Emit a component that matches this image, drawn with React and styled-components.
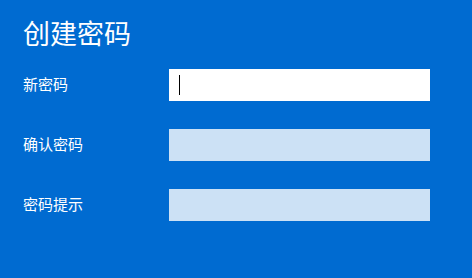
import React from 'react'
import styled, { createGlobalStyle } from 'styled-components'

const GlobalStyle = createGlobalStyle`
  html, body {
    margin: 0;
    padding: 0;
    background: #006bd1;
  }
  body {
    font-family: "Noto Sans CJK SC", "Noto Sans", sans-serif;
  }
`

const Page = styled.div`
  width: 472px;
  height: 278px;
  background: #006bd1;
  color: #ffffff;
  padding: 19px 0 0 23px;
  box-sizing: border-box;
  overflow: hidden;
`

const Title = styled.h1`
  margin: 0 0 22px 0;
  font-size: 27px;
  line-height: 28px;
  font-weight: 400;
`

const Form = styled.div`
  display: flex;
  flex-direction: column;
  gap: 28px;
`

const Row = styled.div`
  display: flex;
  align-items: center;
  height: 32px;
`

const Label = styled.label`
  width: 146px;
  font-size: 15px;
  line-height: 1;
  margin-top: -4px;
`

const Field = styled.div`
  position: relative;
  width: 261px;
  height: 32px;
  background: ${(p) => (p.$active ? '#ffffff' : '#cce1f5')};
`

const Caret = styled.span`
  position: absolute;
  left: 10px;
  top: 6px;
  width: 1px;
  height: 20px;
  background: #000000;
`

const App = () => {
  return (
    <Page>
      <GlobalStyle />
      <Title>创建密码</Title>
      <Form>
        <Row>
          <Label>新密码</Label>
          <Field $active>
            <Caret />
          </Field>
        </Row>
        <Row>
          <Label>确认密码</Label>
          <Field />
        </Row>
        <Row>
          <Label>密码提示</Label>
          <Field />
        </Row>
      </Form>
    </Page>
  )
}

export default App
